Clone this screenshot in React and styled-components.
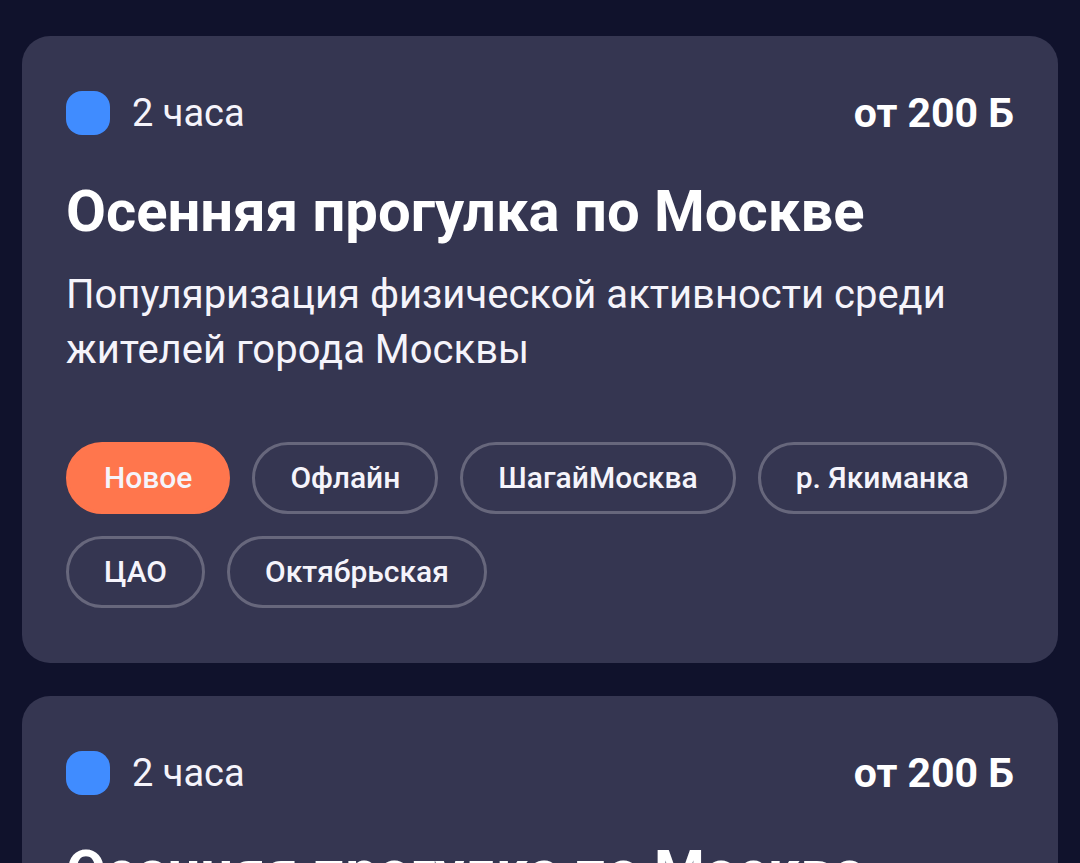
import React from 'react';
import styled, { createGlobalStyle } from 'styled-components';

const events = [
  {
    id: 1,
    duration: '2 часа',
    price: 'от 200 Б',
    title: 'Осенняя прогулка по Москве',
    description:
      'Популяризация физической активности среди жителей города Москвы',
    tags: ['Офлайн', 'ШагайМосква', 'р. Якиманка', 'ЦАО', 'Октябрьская'],
  },
  {
    id: 2,
    duration: '2 часа',
    price: 'от 200 Б',
    title: 'Осенняя прогулка по Москве',
    description:
      'Популяризация физической активности среди жителей города Москвы',
    tags: ['Офлайн', 'ШагайМосква', 'р. Якиманка', 'ЦАО', 'Октябрьская'],
  },
];

const App = () => {
  return (
    <>
      <GlobalStyle />
      <Feed>
        {events.map((event) => (
          <EventCard key={event.id} event={event} />
        ))}
      </Feed>
    </>
  );
};

export default App;

const EventCard = ({ event }) => {
  return (
    <Card>
      <Meta>
        <Duration>
          <Marker />
          {event.duration}
        </Duration>
        <Price>{event.price}</Price>
      </Meta>
      <Title>{event.title}</Title>
      <Description>{event.description}</Description>
      <Tags>
        <Tag $accent>Новое</Tag>
        {event.tags.map((tag) => (
          <Tag key={tag}>{tag}</Tag>
        ))}
      </Tags>
    </Card>
  );
};

const GlobalStyle = createGlobalStyle`
  * {
    box-sizing: border-box;
  }
  html {
    /* the feed runs past the fold, hide the bar like on a phone */
    scrollbar-width: none;
  }
  body {
    margin: 0;
    background: #10122c;
    color: #fff;
    font-family: Roboto, 'Liberation Sans', sans-serif;
  }
`;

const Feed = styled.main`
  display: flex;
  flex-direction: column;
  gap: 33px;
  padding: 36px 22px;
`;

const Card = styled.article`
  padding: 55px 44px;
  border-radius: 28px;
  background: #353651;
`;

const Meta = styled.div`
  display: flex;
  align-items: center;
  justify-content: space-between;
  line-height: 44px;
`;

const Duration = styled.div`
  display: flex;
  align-items: center;
  gap: 22px;
  font-size: 38px;
  color: #f5f4fb;
`;

const Marker = styled.span`
  width: 44px;
  height: 44px;
  border-radius: 16px;
  background: #408cff;
`;

const Price = styled.div`
  font-size: 41px;
  font-weight: 700;
`;

const Title = styled.h2`
  margin: 38px 0 0;
  font-size: 58px;
  font-weight: 700;
  line-height: 76px;
`;

const Description = styled.p`
  margin: 18px 0 0;
  font-size: 40px;
  line-height: 55px;
  color: #f5f4fb;
`;

const Tags = styled.ul`
  display: flex;
  flex-wrap: wrap;
  gap: 22px;
  margin: 65px 0 0;
  padding: 0;
  list-style: none;
`;

const Tag = styled.li`
  padding: 0 35px;
  border: 3px solid ${({ $accent }) => ($accent ? '#ff764d' : '#67677c')};
  border-radius: 36px;
  background: ${({ $accent }) => ($accent ? '#ff764d' : 'transparent')};
  color: #f5f4fb;
  font-size: 30px;
  font-weight: 500;
  line-height: 66px;
`;
